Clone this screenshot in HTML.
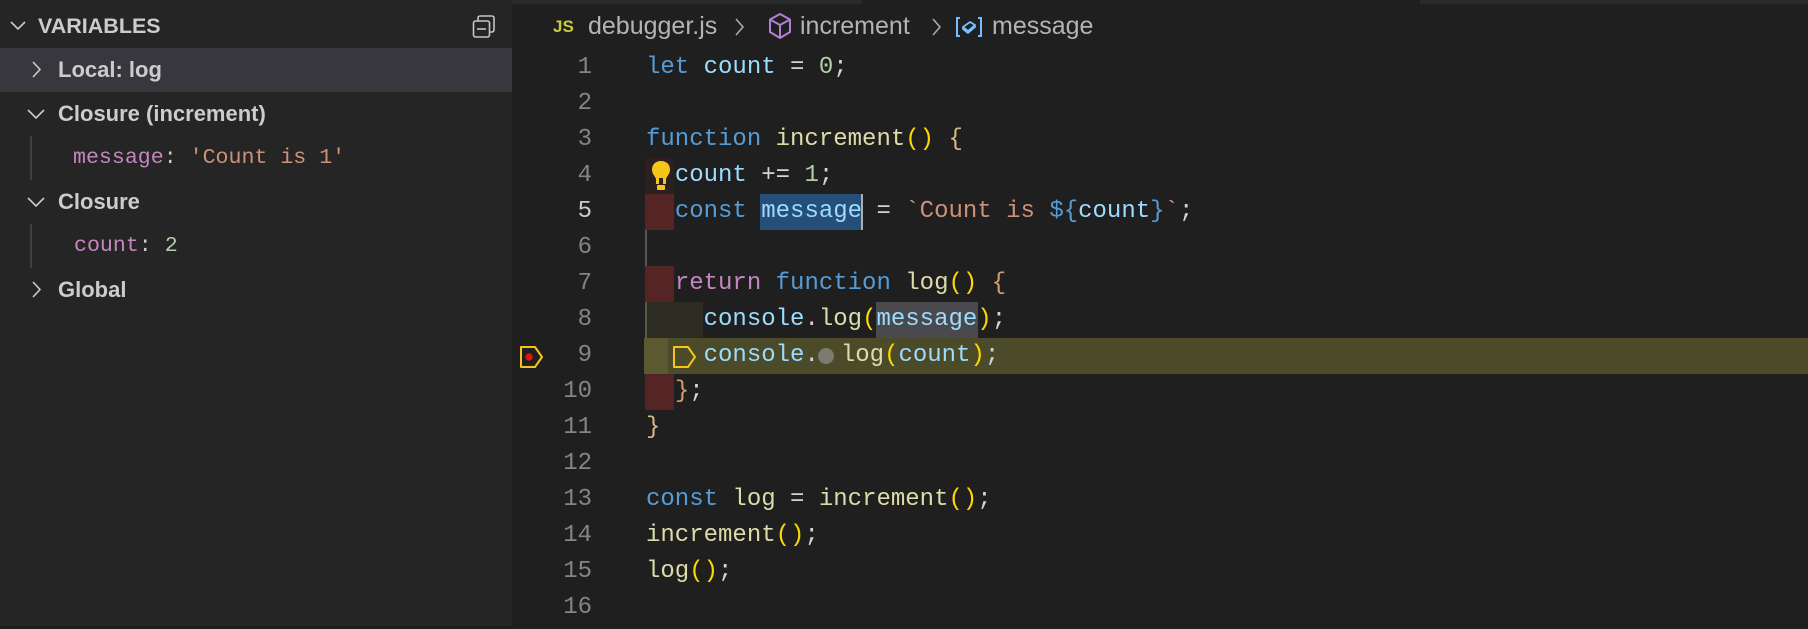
<!DOCTYPE html>
<html><head><meta charset="utf-8"><style>
*{margin:0;padding:0;box-sizing:border-box}
body{width:1808px;height:626px;background:#1f1f1f;overflow:hidden;position:relative;font-family:"Liberation Sans",sans-serif}
#side{position:absolute;left:0;top:0;width:512px;height:626px;background:#252526}
.row{position:absolute;left:0;width:512px;height:44px;color:#cccccc;font-weight:bold;font-size:22px;line-height:44px}
.chev{position:absolute;top:0;width:20px;height:44px}
.mono{font-family:"Liberation Mono",monospace;font-weight:normal;font-size:21.6px}
.guide{position:absolute;left:30px;width:2px;height:44px;background:#404040}
#ed{position:absolute;left:512px;top:0;right:0;height:626px;background:#1f1f1f}
#shift{position:absolute;left:0;top:3px;width:1808px;height:626px}
.ln{position:absolute;left:520px;width:72px;text-align:right;font-family:"Liberation Mono",monospace;font-size:24px;line-height:36px;height:36px;color:#858585}
.cl{position:absolute;left:646px;font-family:"Liberation Mono",monospace;font-size:24px;line-height:36px;height:36px;white-space:pre;color:#d4d4d4}
.k{color:#569cd6}.v{color:#9cdcfe}.f{color:#dcdcaa}.n{color:#b5cea8}.s{color:#ce9178}.r{color:#c586c0}.b{color:#ffd700}.o{color:#d7ba7d}.p{color:#d4d4d4}
.deco{position:absolute}
.bc{position:absolute;top:8px;font-size:25px;color:#b4b4b4;line-height:36px}
</style></head><body>
<div id="side">
  <div class="row" style="top:4px;height:44px">
    <svg class="chev" style="left:8px" viewBox="0 0 20 44"><path d="M3 18 L10 25 L17 18" stroke="#ccc" stroke-width="1.6" fill="none"/></svg>
    <span style="position:absolute;left:38px;top:0;font-size:21.5px">VARIABLES</span>
    <svg style="position:absolute;left:472px;top:10px" width="25" height="25" viewBox="0 0 25 25"><rect x="6" y="2" width="16" height="16" rx="2" stroke="#c5c5c5" stroke-width="1.6" fill="none"/><rect x="1.5" y="7" width="16" height="16" rx="2" stroke="#c5c5c5" stroke-width="1.6" fill="#252526"/><path d="M5 15 H14" stroke="#c5c5c5" stroke-width="1.6"/></svg>
  </div>
  <div class="row" style="top:48px;background:#37373d">
    <svg class="chev" style="left:28px" viewBox="0 0 20 44"><path d="M5 14 L12 21.5 L5 29" stroke="#ccc" stroke-width="1.6" fill="none"/></svg>
    <span style="position:absolute;left:58px">Local: log</span>
  </div>
  <div class="row" style="top:92px">
    <svg class="chev" style="left:26px" viewBox="0 0 20 44"><path d="M2 18 L10 26 L18 18" stroke="#ccc" stroke-width="1.6" fill="none"/></svg>
    <span style="position:absolute;left:58px">Closure (increment)</span>
  </div>
  <div class="row" style="top:136px"><div class="guide" style="top:0"></div>
    <span class="mono" style="position:absolute;left:73px"><span style="color:#c586c0">message</span>: <span style="color:#ce9178">'Count is 1'</span></span>
  </div>
  <div class="row" style="top:180px">
    <svg class="chev" style="left:26px" viewBox="0 0 20 44"><path d="M2 18 L10 26 L18 18" stroke="#ccc" stroke-width="1.6" fill="none"/></svg>
    <span style="position:absolute;left:58px">Closure</span>
  </div>
  <div class="row" style="top:224px"><div class="guide" style="top:0"></div>
    <span class="mono" style="position:absolute;left:74px"><span style="color:#c586c0">count</span>: <span style="color:#b5cea8">2</span></span>
  </div>
  <div class="row" style="top:268px">
    <svg class="chev" style="left:28px" viewBox="0 0 20 44"><path d="M5 14 L12 21.5 L5 29" stroke="#ccc" stroke-width="1.6" fill="none"/></svg>
    <span style="position:absolute;left:58px">Global</span>
  </div>
</div>
<div id="ed"></div>
<div style="position:absolute;left:512px;top:0;width:350px;height:4px;background:#2a2a2a"></div>
<div style="position:absolute;left:1420px;top:0;width:388px;height:4px;background:#2a2a2a"></div>

<!-- breadcrumb -->
<span class="bc" style="left:553px;font-size:17px;font-weight:bold;color:#cbcb41;top:9px">JS</span>
<span class="bc" style="left:588px">debugger.js</span>
<svg style="position:absolute;left:733px;top:15px" width="14" height="24" viewBox="0 0 14 24"><path d="M3 4 L10 12 L3 20" stroke="#aaa" stroke-width="1.6" fill="none"/></svg>
<svg style="position:absolute;left:767px;top:12px" width="26" height="28" viewBox="0 0 26 28"><path d="M13 2 L23 7.5 V20 L13 26 L3 20 V7.5 Z M3 7.5 L13 13 L23 7.5 M13 13 V26" stroke="#b180d7" stroke-width="2" fill="none" stroke-linejoin="round"/></svg>
<span class="bc" style="left:800px">increment</span>
<svg style="position:absolute;left:930px;top:15px" width="14" height="24" viewBox="0 0 14 24"><path d="M3 4 L10 12 L3 20" stroke="#aaa" stroke-width="1.6" fill="none"/></svg>
<svg style="position:absolute;left:955px;top:15px" width="28" height="24" viewBox="0 0 28 24"><path d="M5 3 H2 V21 H5 M23 3 H26 V21 H23" stroke="#75beff" stroke-width="2" fill="none"/><path d="M8 12 L15 7 L20 10 L13 16 Z M8 12 L8 14 L13 18 L20 12 L20 10" stroke="#75beff" stroke-width="1.8" fill="none" stroke-linejoin="round"/></svg>
<span class="bc" style="left:992px">message</span>

<div id="shift">
<!-- decorations -->
<div class="deco" style="left:645px;top:155px;width:29px;height:36px;background:#2b1f1f"></div>
<div class="deco" style="left:645px;top:191px;width:29px;height:36px;background:#552424"></div>
<div class="deco" style="left:645px;top:227px;width:2px;height:36px;background:#555"></div>
<div class="deco" style="left:645px;top:263px;width:29px;height:36px;background:#552424"></div>
<div class="deco" style="left:645px;top:299px;width:58px;height:36px;background:#2c2c22"></div>
<div class="deco" style="left:645px;top:299px;width:2px;height:36px;background:#5a5a4a"></div>
<div class="deco" style="left:644px;top:335px;width:1164px;height:36px;background:#4b4a29"></div>
<div class="deco" style="left:644px;top:335px;width:24px;height:36px;background:#5a5930"></div>
<div class="deco" style="left:645px;top:371px;width:29px;height:36px;background:#552424"></div>
<div class="deco" style="left:760px;top:191px;width:102px;height:36px;background:#264f78"></div>
<div class="deco" style="left:861px;top:191px;width:2px;height:36px;background:#aeafad"></div>
<div class="deco" style="left:876px;top:299px;width:102px;height:36px;background:#4a4a4e"></div>

<svg style="position:absolute;left:651px;top:157px" width="20" height="32" viewBox="0 0 20 32"><path d="M10 1 C4 1 1 5 1 9.5 C1 14 4 16 5 19 V24 H15 V19 C16 16 19 14 19 9.5 C19 5 16 1 10 1 Z" fill="#f5c518"/><rect x="6" y="25" width="8" height="5" rx="1" fill="#f5c518"/><rect x="8" y="18" width="4" height="7" fill="#2b1f1f"/></svg>
<svg style="position:absolute;left:519px;top:342px" width="26" height="24" viewBox="0 0 26 24"><path d="M2 2 H16 L23 12 L16 22 H2 Z" stroke="#f5c518" stroke-width="2" fill="none" stroke-linejoin="round"/><circle cx="10" cy="12" r="3.7" fill="#e51400"/></svg>
<svg style="position:absolute;left:672px;top:342px" width="27" height="24" viewBox="0 0 27 24"><path d="M2 2 H16 L23 12 L16 22 H2 Z" stroke="#f5c518" stroke-width="2" fill="none" stroke-linejoin="round"/></svg>
<div class="deco" style="left:818px;top:345px;width:16px;height:16px;border-radius:50%;background:#7a7a6e"></div>

<div class="ln" style="top:47px">1</div>
<div class="ln" style="top:83px">2</div>
<div class="ln" style="top:119px">3</div>
<div class="ln" style="top:155px">4</div>
<div class="ln" style="top:191px;color:#cccccc">5</div>
<div class="ln" style="top:227px">6</div>
<div class="ln" style="top:263px">7</div>
<div class="ln" style="top:299px">8</div>
<div class="ln" style="top:335px">9</div>
<div class="ln" style="top:371px">10</div>
<div class="ln" style="top:407px">11</div>
<div class="ln" style="top:443px">12</div>
<div class="ln" style="top:479px">13</div>
<div class="ln" style="top:515px">14</div>
<div class="ln" style="top:551px">15</div>
<div class="ln" style="top:587px">16</div>

<div class="cl" style="top:47px"><span class="k">let</span> <span class="v">count</span> = <span class="n">0</span>;</div>
<div class="cl" style="top:119px"><span class="k">function</span> <span class="f">increment</span><span class="b">()</span> <span class="o">{</span></div>
<div class="cl" style="top:155px">  <span class="v">count</span> += <span class="n">1</span>;</div>
<div class="cl" style="top:191px">  <span class="k">const</span> <span class="v">message</span> = <span class="s">`Count is </span><span class="k">${</span><span class="v">count</span><span class="k">}</span><span class="s">`</span>;</div>
<div class="cl" style="top:263px">  <span class="r">return</span> <span class="k">function</span> <span class="f">log</span><span class="b">()</span> <span style="color:#d69d6a">{</span></div>
<div class="cl" style="top:299px">    <span class="v">console</span>.<span class="f">log</span><span class="b">(</span><span class="v">message</span><span class="b">)</span>;</div>
<div class="cl" style="top:335px">    <span class="v">console</span>.<span style="display:inline-block;width:22px"></span><span class="f">log</span><span class="b">(</span><span class="v">count</span><span class="b">)</span>;</div>
<div class="cl" style="top:371px">  <span style="color:#d69d6a">}</span>;</div>
<div class="cl" style="top:407px"><span class="o">}</span></div>
<div class="cl" style="top:479px"><span class="k">const</span> <span class="f">log</span> = <span class="f">increment</span><span class="b">()</span>;</div>
<div class="cl" style="top:515px"><span class="f">increment</span><span class="b">()</span>;</div>
<div class="cl" style="top:551px"><span class="f">log</span><span class="b">()</span>;</div>
</div>
</body></html>
